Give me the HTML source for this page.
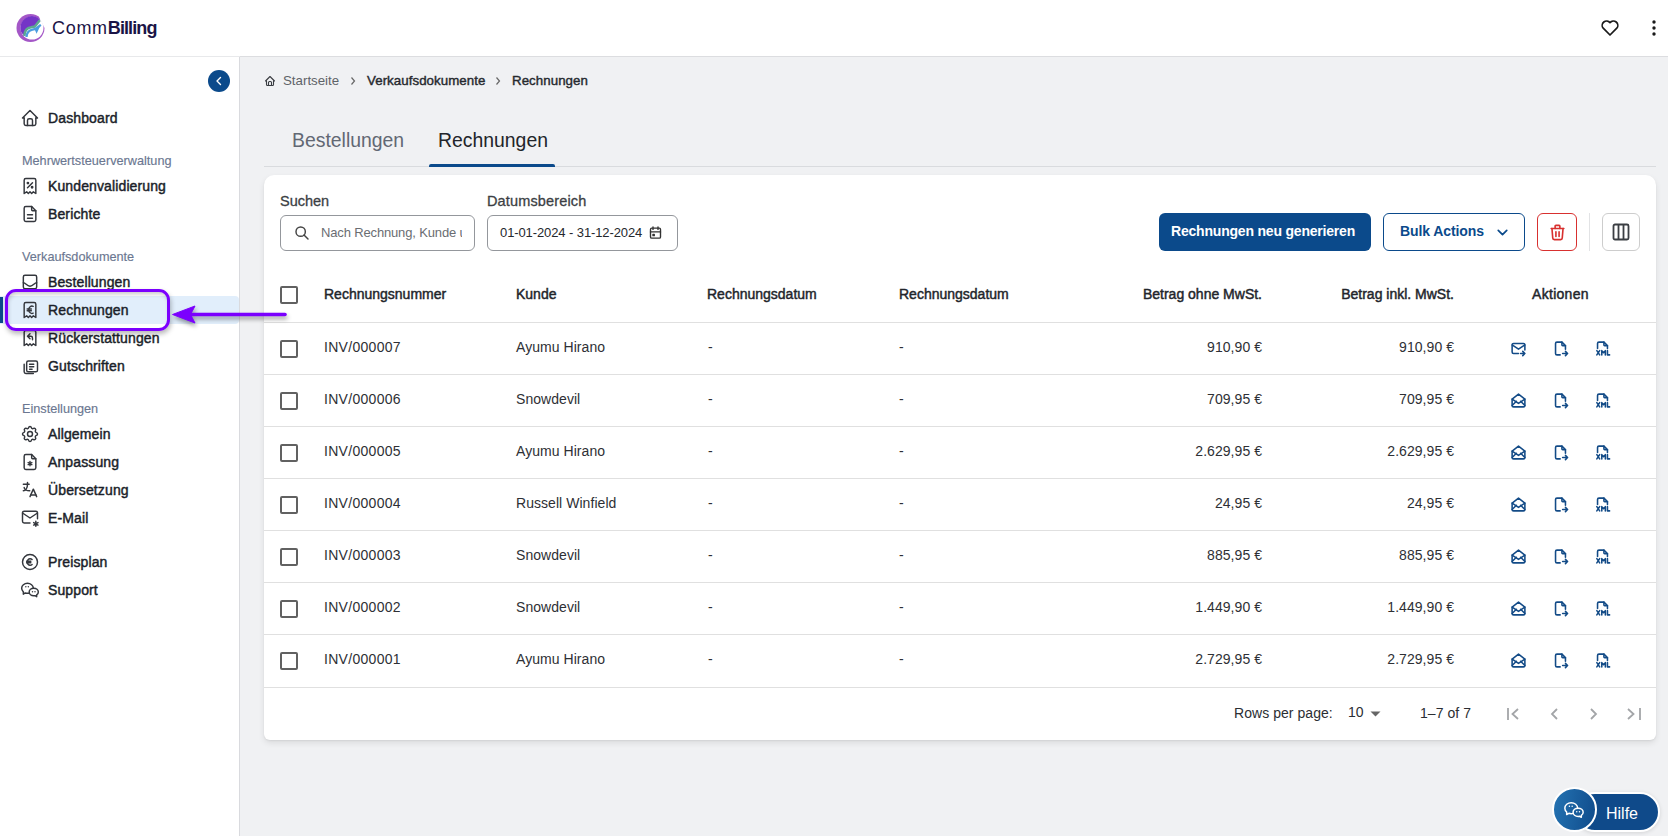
<!DOCTYPE html>
<html><head><meta charset="utf-8">
<style>
*{box-sizing:border-box;margin:0;padding:0}
html,body{width:1668px;height:836px;overflow:hidden;background:#f0f1f3;font-family:"Liberation Sans",sans-serif;color:#1f2228}
.abs{position:absolute}
.t{position:absolute;white-space:nowrap;line-height:20px;height:20px}
#header{position:absolute;left:0;top:0;width:1668px;height:56px;background:#fff}
#sidebar{position:absolute;left:0;top:56px;width:240px;height:780px;background:#fff;border-right:1px solid #d9dade}
.nav{position:absolute;left:0;width:239px;height:28px}
.nav .lbl{position:absolute;left:48px;top:4px;line-height:20px;font-size:14px;font-weight:400;-webkit-text-stroke:0.45px #1b1f2a;color:#1b1f2a;letter-spacing:0.12px;white-space:nowrap}
.nav svg{position:absolute;left:20px;top:4px}
.sec{position:absolute;left:22px;font-size:12.7px;color:#6b7791;line-height:18px;-webkit-text-stroke:0.15px #6b7791;white-space:nowrap}
#card{position:absolute;left:264px;top:175px;width:1392px;height:565px;background:#fff;border-radius:10px 10px 6px 6px;box-shadow:0 3px 6px rgba(0,0,0,0.09),0 1px 2px rgba(0,0,0,0.06)}
.hd{position:absolute;font-size:14px;font-weight:400;-webkit-text-stroke:0.45px #22252b;color:#22252b;white-space:nowrap;line-height:20px}
.cell{position:absolute;font-size:14px;color:#2e3035;letter-spacing:0.05px;white-space:nowrap;line-height:20px}
.row{position:absolute;left:0;width:1392px;height:52px;border-bottom:1px solid #e0e0e0}
.cb{position:absolute;left:16px;width:18px;height:18px;border:2px solid #616161;border-radius:2px}
</style></head>
<body>
<div id="header">
  <!-- logo -->
  <svg class="abs" style="left:15px;top:13px" width="31" height="30" viewBox="15 13 31 30">
    <circle cx="30.5" cy="28" r="14" fill="#a457c7"/>
    <circle cx="32" cy="28" r="11.5" fill="#fff"/>
    <path d="M37.8 13 L47 13 L47 27.5 L44.3 27.5 L40.2 19.8 Z" fill="#fff"/>
    <path d="M20.4 28 A11.6 11.6 0 0 1 37.6 17.6 L40 19.8 L34.6 26.2 L31 27 C26.5 27.5 24.5 30 24.4 35.5 C21.5 33.5 20.4 31 20.4 28 Z" fill="#7434c6"/>
    <path d="M24.4 36 C24.5 30.5 26.5 27.8 31 27.2 L34.8 26.5 L39.8 20.2" stroke="#5da890" stroke-width="2.5" fill="none"/>
    <path d="M26.5 37 C26.8 32.5 28.8 30.2 32.5 29.6 L35.6 29 L40.8 24.8" stroke="#4b9de0" stroke-width="2.3" fill="none"/>
    <path d="M34.5 29 L41 24.2 L36.6 33.8 Z" fill="#4b9de0"/>
  </svg>
  <div class="t" style="left:52px;top:18px;font-size:18px;color:#1b1446"><span style="letter-spacing:0.7px">Comm</span><b style="letter-spacing:-0.9px">Billing</b></div>
  <!-- heart -->
  <svg class="abs" style="left:1600px;top:18px" width="20" height="20" viewBox="0 0 20 20"><path d="M10 17 L3.2 10.2 A3.9 3.9 0 0 1 10 4.6 A3.9 3.9 0 0 1 16.8 10.2 Z" fill="none" stroke="#1a1a1a" stroke-width="1.7" stroke-linejoin="round"/></svg>
  <svg class="abs" style="left:1650px;top:19px" width="8" height="18" viewBox="0 0 8 18"><circle cx="4" cy="3" r="1.7" fill="#1a1a1a"/><circle cx="4" cy="9" r="1.7" fill="#1a1a1a"/><circle cx="4" cy="15" r="1.7" fill="#1a1a1a"/></svg>
</div>

<div id="sidebar">
  <div class="abs" style="left:0;top:0;width:240px;height:1px;background:#e8e9eb"></div>
  <div class="abs" style="left:208px;top:14px;width:22px;height:22px;border-radius:50%;background:#0b4a8b"></div>
  <svg class="abs" style="left:208px;top:14px" width="22" height="22" viewBox="0 0 22 22"><path d="M12.5 7.5 L9 11 L12.5 14.5" stroke="#fff" stroke-width="1.4" fill="none" stroke-linecap="round" stroke-linejoin="round"/></svg>
  <div class="nav" style="top:48px"><svg width="20" height="20" viewBox="0 0 24 24" fill="none" stroke="#34373d" stroke-width="1.75" stroke-linecap="round" stroke-linejoin="round"><path d="M5 12H3l9-9 9 9h-2"/><path d="M5 12v7a2 2 0 0 0 2 2h10a2 2 0 0 0 2-2v-7"/><path d="M9 21v-6a2 2 0 0 1 2-2h2a2 2 0 0 1 2 2v6"/></svg><div class="lbl">Dashboard</div></div>
  <div class="sec" style="top:96px">Mehrwertsteuerverwaltung</div>
  <div class="nav" style="top:116px"><svg width="20" height="20" viewBox="0 0 24 24" fill="none" stroke="#34373d" stroke-width="1.75" stroke-linecap="round" stroke-linejoin="round"><path d="M9 14l6-6"/><circle cx="9.5" cy="8.5" r="0.8"/><circle cx="14.5" cy="13.5" r="0.8"/><path d="M5 21V5a2 2 0 0 1 2-2h10a2 2 0 0 1 2 2v16l-3-2-2 2-2-2-2 2-2-2-3 2"/></svg><div class="lbl">Kundenvalidierung</div></div>
  <div class="nav" style="top:144px"><svg width="20" height="20" viewBox="0 0 24 24" fill="none" stroke="#34373d" stroke-width="1.75" stroke-linecap="round" stroke-linejoin="round"><path d="M14 3v4a1 1 0 0 0 1 1h4"/><path d="M17 21H7a2 2 0 0 1-2-2V5a2 2 0 0 1 2-2h7l5 5v11a2 2 0 0 1-2 2z"/><path d="M9 13h6"/><path d="M9 17h6"/></svg><div class="lbl">Berichte</div></div>
  <div class="sec" style="top:192px">Verkaufsdokumente</div>
  <div class="nav" style="top:212px"><svg width="20" height="20" viewBox="0 0 24 24" fill="none" stroke="#34373d" stroke-width="1.75" stroke-linecap="round" stroke-linejoin="round"><rect x="4" y="4" width="16" height="16" rx="2"/><path d="M4 13c3 0 4 4 8 4s5-4 8-4"/></svg><div class="lbl">Bestellungen</div></div>
  <div class="abs" style="left:0;top:240px;width:239px;height:28px;background:#e1eefb;border-radius:0 4px 4px 0"></div>
  <div class="abs" style="left:0;top:241px;width:3px;height:26px;background:#0b4a8b"></div>
  <div class="nav" style="top:240px"><svg width="20" height="20" viewBox="0 0 24 24" fill="none" stroke="#34373d" stroke-width="1.75" stroke-linecap="round" stroke-linejoin="round"><path d="M5 21V5a2 2 0 0 1 2-2h10a2 2 0 0 1 2 2v16l-3-2-2 2-2-2-2 2-2-2-3 2"/><path d="M15.8 7.6a3.9 4.4 0 1 0 0 8.2"/><path d="M8.6 10.8h5M8.6 12.8h5"/></svg><div class="lbl">Rechnungen</div></div>
  <div class="nav" style="top:268px"><svg width="20" height="20" viewBox="0 0 24 24" fill="none" stroke="#34373d" stroke-width="1.75" stroke-linecap="round" stroke-linejoin="round"><path d="M5 21V5a2 2 0 0 1 2-2h10a2 2 0 0 1 2 2v16l-3-2-2 2-2-2-2 2-2-2-3 2"/><path d="M15 14v-2a2 2 0 0 0-2-2H9l3-3m-3 3 3 3"/></svg><div class="lbl">Rückerstattungen</div></div>
  <div class="nav" style="top:296px"><svg width="20" height="20" viewBox="0 0 24 24" fill="none" stroke="#34373d" stroke-width="1.75" stroke-linecap="round" stroke-linejoin="round"><path d="M8 8a2 2 0 0 1 2-2h9a2 2 0 0 1 2 2v9a2 2 0 0 1-2 2h-9a2 2 0 0 1-2-2z"/><path d="M5 10v9a2 2 0 0 0 2 2h9"/><path d="M11.5 10h5M11.5 13h5M11.5 16h3"/></svg><div class="lbl">Gutschriften</div></div>
  <div class="sec" style="top:344px">Einstellungen</div>
  <div class="nav" style="top:364px"><svg width="20" height="20" viewBox="0 0 24 24" fill="none" stroke="#34373d" stroke-width="1.75" stroke-linecap="round" stroke-linejoin="round"><path d="M10.325 4.317c.426-1.756 2.924-1.756 3.35 0a1.724 1.724 0 0 0 2.573 1.066c1.543-.94 3.31.826 2.37 2.37a1.724 1.724 0 0 0 1.065 2.572c1.756.426 1.756 2.924 0 3.35a1.724 1.724 0 0 0-1.066 2.573c.94 1.543-.826 3.31-2.37 2.37a1.724 1.724 0 0 0-2.572 1.065c-.426 1.756-2.924 1.756-3.35 0a1.724 1.724 0 0 0-2.573-1.066c-1.543.94-3.31-.826-2.37-2.37a1.724 1.724 0 0 0-1.065-2.572c-1.756-.426-1.756-2.924 0-3.35a1.724 1.724 0 0 0 1.066-2.573c-.94-1.543.826-3.31 2.37-2.37 1 .608 2.296.07 2.572-1.065z"/><circle cx="12" cy="12" r="3"/></svg><div class="lbl">Allgemein</div></div>
  <div class="nav" style="top:392px"><svg width="20" height="20" viewBox="0 0 24 24" fill="none" stroke="#34373d" stroke-width="1.75" stroke-linecap="round" stroke-linejoin="round"><path d="M14 3v4a1 1 0 0 0 1 1h4"/><path d="M17 21H7a2 2 0 0 1-2-2V5a2 2 0 0 1 2-2h7l5 5v11a2 2 0 0 1-2 2z"/><path d="M12 11.5v5M9.8 12.75l4.4 2.5M14.2 12.75l-4.4 2.5"/></svg><div class="lbl">Anpassung</div></div>
  <div class="nav" style="top:420px"><svg width="20" height="20" viewBox="0 0 24 24" fill="none" stroke="#34373d" stroke-width="1.75" stroke-linecap="round" stroke-linejoin="round"><path d="M4 5h7"/><path d="M9 3v2c0 4.418-2.239 8-5 8"/><path d="M5 9c0 2.144 2.952 3.908 6.7 4"/><path d="M12 20l4-9 4 9"/><path d="M19.1 18h-6.2"/></svg><div class="lbl">Übersetzung</div></div>
  <div class="nav" style="top:448px"><svg width="20" height="20" viewBox="0 0 24 24" fill="none" stroke="#34373d" stroke-width="1.75" stroke-linecap="round" stroke-linejoin="round"><path d="M12 18H5a2 2 0 0 1-2-2V6a2 2 0 0 1 2-2h14a2 2 0 0 1 2 2v7"/><path d="M3 6l9 6 9-6"/><path d="M19 16v6M16.4 17.5l5.2 3M21.6 17.5l-5.2 3"/></svg><div class="lbl">E-Mail</div></div>
  <div class="nav" style="top:492px"><svg width="20" height="20" viewBox="0 0 24 24" fill="none" stroke="#34373d" stroke-width="1.75" stroke-linecap="round" stroke-linejoin="round"><circle cx="12" cy="12" r="9"/><path d="M14.5 9a3.5 4 0 1 0 0 6"/><path d="M8 11h5M8 13h5"/></svg><div class="lbl">Preisplan</div></div>
  <div class="nav" style="top:520px"><svg width="20" height="20" viewBox="0 0 24 24" fill="none" stroke="#34373d" stroke-width="1.75" stroke-linecap="round" stroke-linejoin="round"><path d="M16.5 10c3.038 0 5.5 2.015 5.5 4.5 0 1.397-.778 2.645-2 3.47V20l-1.964-1.178a6.649 6.649 0 0 1-1.536.178c-3.038 0-5.5-2.015-5.5-4.5s2.462-4.5 5.5-4.5z"/><path d="M11.197 15.698c-.69.196-1.43.302-2.197.302a8.008 8.008 0 0 1-2.612-.432L4 17v-2.801C2.763 13.117 2 11.635 2 10c0-3.314 3.134-6 7-6 3.782 0 6.863 2.57 7 5.785v.233"/><path d="M10 8h.01M7 8h.01M15 14h.01M18 14h.01"/></svg><div class="lbl">Support</div></div>
</div>


<div class="abs" style="left:240px;top:56px;width:1428px;height:1px;background:#dcdde0"></div>
<!-- breadcrumb -->
<svg class="abs" style="left:264px;top:75px" width="12" height="12" viewBox="0 0 24 24" fill="none" stroke="#3a3d42" stroke-width="2.2" stroke-linecap="round" stroke-linejoin="round"><path d="M5 12H3l9-9 9 9h-2"/><path d="M5 12v7a2 2 0 0 0 2 2h10a2 2 0 0 0 2-2v-7"/><path d="M9 21v-6a2 2 0 0 1 2-2h2a2 2 0 0 1 2 2v6"/></svg>
<div class="t" style="left:283px;top:71px;font-size:13.3px;color:#5f6368">Startseite</div>
<svg class="abs" style="left:349px;top:76px" width="8" height="10" viewBox="0 0 8 10"><path d="M2.5 1.5 L5.5 5 L2.5 8.5" stroke="#666" stroke-width="1.2" fill="none"/></svg>
<div class="t" style="left:367px;top:71px;font-size:13.3px;-webkit-text-stroke:0.4px #26292e;color:#26292e;letter-spacing:0.05px">Verkaufsdokumente</div>
<svg class="abs" style="left:494px;top:76px" width="8" height="10" viewBox="0 0 8 10"><path d="M2.5 1.5 L5.5 5 L2.5 8.5" stroke="#666" stroke-width="1.2" fill="none"/></svg>
<div class="t" style="left:512px;top:71px;font-size:13.3px;-webkit-text-stroke:0.4px #26292e;color:#26292e;letter-spacing:0.05px">Rechnungen</div>

<!-- tabs -->
<div class="abs" style="left:264px;top:166px;width:1392px;height:1px;background:#d9dbde"></div>
<div class="t" style="left:292px;top:128px;height:24px;line-height:24px;font-size:19.4px;color:#626873">Bestellungen</div>
<div class="t" style="left:438px;top:128px;height:24px;line-height:24px;font-size:19.4px;color:#22252a">Rechnungen</div>
<div class="abs" style="left:429px;top:164px;width:126px;height:3px;background:#0b4a8b;border-radius:2px 2px 0 0"></div>

<!-- card -->
<div id="card">
  <div class="t" style="left:16px;top:16px;font-size:14.5px;-webkit-text-stroke:0.3px #3c3f44;color:#3c3f44">Suchen</div>
  <div class="abs" style="left:16px;top:40px;width:195px;height:36px;border:1px solid #94979c;border-radius:6px"></div>
  <svg class="abs" style="left:30px;top:50px" width="16" height="16" viewBox="0 0 24 24" fill="none" stroke="#444" stroke-width="2.2" stroke-linecap="round"><circle cx="10" cy="10" r="7"/><path d="M21 21l-6-6"/></svg>
  <div class="t" style="left:57px;top:48px;width:141px;overflow:hidden;font-size:13px;color:#6a6d72;letter-spacing:-0.15px">Nach Rechnung, Kunde u</div>
  <div class="t" style="left:223px;top:16px;font-size:14.5px;-webkit-text-stroke:0.3px #3c3f44;color:#3c3f44;letter-spacing:0.15px">Datumsbereich</div>
  <div class="abs" style="left:223px;top:40px;width:191px;height:36px;border:1px solid #94979c;border-radius:6px"></div>
  <div class="t" style="left:236px;top:48px;font-size:13px;color:#25282d;letter-spacing:-0.1px">01-01-2024 - 31-12-2024</div>
  <svg class="abs" style="left:384px;top:50px" width="15" height="15" viewBox="0 0 24 24" fill="none" stroke="#333" stroke-width="2.2" stroke-linecap="round" stroke-linejoin="round"><rect x="4" y="5" width="16" height="16" rx="2"/><path d="M16 3v4M8 3v4M4 11h16"/><rect x="8" y="15" width="2" height="2" fill="#333"/></svg>

  <!-- buttons -->
  <div class="abs" style="left:895px;top:38px;width:212px;height:38px;background:#0b4a8b;border-radius:6px"></div>
  <div class="t" style="left:907px;top:46px;font-size:14px;font-weight:700;color:#fff;letter-spacing:-0.2px">Rechnungen neu generieren</div>
  <div class="abs" style="left:1119px;top:38px;width:142px;height:38px;border:1px solid #0b4a8b;border-radius:6px"></div>
  <div class="t" style="left:1136px;top:46px;font-size:14px;font-weight:700;color:#0b4a8b;letter-spacing:-0.1px">Bulk Actions</div>
  <svg class="abs" style="left:1230px;top:49px" width="17" height="17" viewBox="0 0 24 24" fill="none" stroke="#0b4a8b" stroke-width="2.4" stroke-linecap="round" stroke-linejoin="round"><path d="M6 9l6 6 6-6"/></svg>
  <div class="abs" style="left:1273px;top:38px;width:40px;height:38px;border:1px solid #d8302f;border-radius:6px"></div>
  <svg class="abs" style="left:1284px;top:48px" width="19" height="19" viewBox="0 0 24 24" fill="none" stroke="#d8302f" stroke-width="2.05" stroke-linecap="round" stroke-linejoin="round"><path d="M4 7h16"/><path d="M10 11v6M14 11v6"/><path d="M5 7l1 12a2 2 0 0 0 2 2h8a2 2 0 0 0 2-2l1-12"/><path d="M9 7V4a1 1 0 0 1 1-1h4a1 1 0 0 1 1 1v3"/></svg>
  <div class="abs" style="left:1325px;top:38px;width:1px;height:38px;background:#e2e3e5"></div>
  <div class="abs" style="left:1338px;top:38px;width:38px;height:38px;border:1px solid #cdcdcd;border-radius:6px"></div>
  <svg class="abs" style="left:1347px;top:47px" width="20" height="20" viewBox="0 0 20 20" fill="none" stroke="#3b3e43" stroke-width="1.8" stroke-linejoin="round"><rect x="2.5" y="2.5" width="15" height="15" rx="1.5"/><path d="M7.5 2.5v15M12.5 2.5v15"/></svg>

  <!-- table header -->
  <div class="cb" style="top:111px"></div>
  <div class="hd" style="left:60px;top:109px">Rechnungsnummer</div>
  <div class="hd" style="left:252px;top:109px">Kunde</div>
  <div class="hd" style="left:443px;top:109px">Rechnungsdatum</div>
  <div class="hd" style="left:635px;top:109px">Rechnungsdatum</div>
  <div class="hd" style="right:394px;top:109px">Betrag ohne MwSt.</div>
  <div class="hd" style="right:202px;top:109px">Betrag inkl. MwSt.</div>
  <div class="hd" style="left:1268px;top:109px;letter-spacing:0.3px">Aktionen</div>
  <div class="abs" style="left:0;top:147px;width:1392px;height:1px;background:#e0e0e0"></div>
  <div class="cb" style="top:165px"></div>
  <div class="cell" style="left:60px;top:162px;letter-spacing:0.3px">INV/000007</div>
  <div class="cell" style="left:252px;top:162px">Ayumu Hirano</div>
  <div class="cell" style="left:444px;top:162px">-</div>
  <div class="cell" style="left:635px;top:162px">-</div>
  <div class="cell" style="right:394px;top:162px">910,90 €</div>
  <div class="cell" style="right:202px;top:162px">910,90 €</div>
  <svg class="abs" style="left:1246px;top:165px" width="17" height="17" viewBox="0 0 24 24" fill="none" stroke="#134b87" stroke-width="2.2" stroke-linecap="round" stroke-linejoin="round"><path d="M12 19H5a2 2 0 0 1-2-2V7a2 2 0 0 1 2-2h14a2 2 0 0 1 2 2v7"/><path d="M3 7l9 6 9-6"/><path d="M15 19h6m-3-3 3 3-3 3"/></svg>
  <svg class="abs" style="left:1288px;top:165px" width="17" height="17" viewBox="0 0 24 24" fill="none" stroke="#134b87" stroke-width="2.2" stroke-linecap="round" stroke-linejoin="round"><path d="M14 3v4a1 1 0 0 0 1 1h4"/><path d="M11.5 21H7a2 2 0 0 1-2-2V5a2 2 0 0 1 2-2h7l5 5v5"/><path d="M15 19h7m-3-3 3 3-3 3"/></svg>
  <svg class="abs" style="left:1330px;top:165px" width="17" height="17" viewBox="0 0 24 24" fill="none" stroke="#134b87" stroke-width="2.2" stroke-linecap="round" stroke-linejoin="round"><path d="M14 3v4a1 1 0 0 0 1 1h4"/><path d="M5 12V5a2 2 0 0 1 2-2h7l5 5v4"/><path d="M4 15l4 6M4 21l4-6M19 15v6h3M11 21v-6l2.5 3 2.5-3v6"/></svg>
  <div class="abs" style="left:0;top:199px;width:1392px;height:1px;background:#e0e0e0"></div>
  <div class="cb" style="top:217px"></div>
  <div class="cell" style="left:60px;top:214px;letter-spacing:0.3px">INV/000006</div>
  <div class="cell" style="left:252px;top:214px">Snowdevil</div>
  <div class="cell" style="left:444px;top:214px">-</div>
  <div class="cell" style="left:635px;top:214px">-</div>
  <div class="cell" style="right:394px;top:214px">709,95 €</div>
  <div class="cell" style="right:202px;top:214px">709,95 €</div>
  <svg class="abs" style="left:1246px;top:217px" width="17" height="17" viewBox="0 0 24 24" fill="none" stroke="#134b87" stroke-width="2.2" stroke-linecap="round" stroke-linejoin="round"><path d="M3 10l9-7 9 7v9a2 2 0 0 1-2 2H5a2 2 0 0 1-2-2z"/><path d="M3 19l6-6M15 13l6 6"/><path d="M3 10l9 6 9-6"/></svg>
  <svg class="abs" style="left:1288px;top:217px" width="17" height="17" viewBox="0 0 24 24" fill="none" stroke="#134b87" stroke-width="2.2" stroke-linecap="round" stroke-linejoin="round"><path d="M14 3v4a1 1 0 0 0 1 1h4"/><path d="M11.5 21H7a2 2 0 0 1-2-2V5a2 2 0 0 1 2-2h7l5 5v5"/><path d="M15 19h7m-3-3 3 3-3 3"/></svg>
  <svg class="abs" style="left:1330px;top:217px" width="17" height="17" viewBox="0 0 24 24" fill="none" stroke="#134b87" stroke-width="2.2" stroke-linecap="round" stroke-linejoin="round"><path d="M14 3v4a1 1 0 0 0 1 1h4"/><path d="M5 12V5a2 2 0 0 1 2-2h7l5 5v4"/><path d="M4 15l4 6M4 21l4-6M19 15v6h3M11 21v-6l2.5 3 2.5-3v6"/></svg>
  <div class="abs" style="left:0;top:251px;width:1392px;height:1px;background:#e0e0e0"></div>
  <div class="cb" style="top:269px"></div>
  <div class="cell" style="left:60px;top:266px;letter-spacing:0.3px">INV/000005</div>
  <div class="cell" style="left:252px;top:266px">Ayumu Hirano</div>
  <div class="cell" style="left:444px;top:266px">-</div>
  <div class="cell" style="left:635px;top:266px">-</div>
  <div class="cell" style="right:394px;top:266px">2.629,95 €</div>
  <div class="cell" style="right:202px;top:266px">2.629,95 €</div>
  <svg class="abs" style="left:1246px;top:269px" width="17" height="17" viewBox="0 0 24 24" fill="none" stroke="#134b87" stroke-width="2.2" stroke-linecap="round" stroke-linejoin="round"><path d="M3 10l9-7 9 7v9a2 2 0 0 1-2 2H5a2 2 0 0 1-2-2z"/><path d="M3 19l6-6M15 13l6 6"/><path d="M3 10l9 6 9-6"/></svg>
  <svg class="abs" style="left:1288px;top:269px" width="17" height="17" viewBox="0 0 24 24" fill="none" stroke="#134b87" stroke-width="2.2" stroke-linecap="round" stroke-linejoin="round"><path d="M14 3v4a1 1 0 0 0 1 1h4"/><path d="M11.5 21H7a2 2 0 0 1-2-2V5a2 2 0 0 1 2-2h7l5 5v5"/><path d="M15 19h7m-3-3 3 3-3 3"/></svg>
  <svg class="abs" style="left:1330px;top:269px" width="17" height="17" viewBox="0 0 24 24" fill="none" stroke="#134b87" stroke-width="2.2" stroke-linecap="round" stroke-linejoin="round"><path d="M14 3v4a1 1 0 0 0 1 1h4"/><path d="M5 12V5a2 2 0 0 1 2-2h7l5 5v4"/><path d="M4 15l4 6M4 21l4-6M19 15v6h3M11 21v-6l2.5 3 2.5-3v6"/></svg>
  <div class="abs" style="left:0;top:303px;width:1392px;height:1px;background:#e0e0e0"></div>
  <div class="cb" style="top:321px"></div>
  <div class="cell" style="left:60px;top:318px;letter-spacing:0.3px">INV/000004</div>
  <div class="cell" style="left:252px;top:318px">Russell Winfield</div>
  <div class="cell" style="left:444px;top:318px">-</div>
  <div class="cell" style="left:635px;top:318px">-</div>
  <div class="cell" style="right:394px;top:318px">24,95 €</div>
  <div class="cell" style="right:202px;top:318px">24,95 €</div>
  <svg class="abs" style="left:1246px;top:321px" width="17" height="17" viewBox="0 0 24 24" fill="none" stroke="#134b87" stroke-width="2.2" stroke-linecap="round" stroke-linejoin="round"><path d="M3 10l9-7 9 7v9a2 2 0 0 1-2 2H5a2 2 0 0 1-2-2z"/><path d="M3 19l6-6M15 13l6 6"/><path d="M3 10l9 6 9-6"/></svg>
  <svg class="abs" style="left:1288px;top:321px" width="17" height="17" viewBox="0 0 24 24" fill="none" stroke="#134b87" stroke-width="2.2" stroke-linecap="round" stroke-linejoin="round"><path d="M14 3v4a1 1 0 0 0 1 1h4"/><path d="M11.5 21H7a2 2 0 0 1-2-2V5a2 2 0 0 1 2-2h7l5 5v5"/><path d="M15 19h7m-3-3 3 3-3 3"/></svg>
  <svg class="abs" style="left:1330px;top:321px" width="17" height="17" viewBox="0 0 24 24" fill="none" stroke="#134b87" stroke-width="2.2" stroke-linecap="round" stroke-linejoin="round"><path d="M14 3v4a1 1 0 0 0 1 1h4"/><path d="M5 12V5a2 2 0 0 1 2-2h7l5 5v4"/><path d="M4 15l4 6M4 21l4-6M19 15v6h3M11 21v-6l2.5 3 2.5-3v6"/></svg>
  <div class="abs" style="left:0;top:355px;width:1392px;height:1px;background:#e0e0e0"></div>
  <div class="cb" style="top:373px"></div>
  <div class="cell" style="left:60px;top:370px;letter-spacing:0.3px">INV/000003</div>
  <div class="cell" style="left:252px;top:370px">Snowdevil</div>
  <div class="cell" style="left:444px;top:370px">-</div>
  <div class="cell" style="left:635px;top:370px">-</div>
  <div class="cell" style="right:394px;top:370px">885,95 €</div>
  <div class="cell" style="right:202px;top:370px">885,95 €</div>
  <svg class="abs" style="left:1246px;top:373px" width="17" height="17" viewBox="0 0 24 24" fill="none" stroke="#134b87" stroke-width="2.2" stroke-linecap="round" stroke-linejoin="round"><path d="M3 10l9-7 9 7v9a2 2 0 0 1-2 2H5a2 2 0 0 1-2-2z"/><path d="M3 19l6-6M15 13l6 6"/><path d="M3 10l9 6 9-6"/></svg>
  <svg class="abs" style="left:1288px;top:373px" width="17" height="17" viewBox="0 0 24 24" fill="none" stroke="#134b87" stroke-width="2.2" stroke-linecap="round" stroke-linejoin="round"><path d="M14 3v4a1 1 0 0 0 1 1h4"/><path d="M11.5 21H7a2 2 0 0 1-2-2V5a2 2 0 0 1 2-2h7l5 5v5"/><path d="M15 19h7m-3-3 3 3-3 3"/></svg>
  <svg class="abs" style="left:1330px;top:373px" width="17" height="17" viewBox="0 0 24 24" fill="none" stroke="#134b87" stroke-width="2.2" stroke-linecap="round" stroke-linejoin="round"><path d="M14 3v4a1 1 0 0 0 1 1h4"/><path d="M5 12V5a2 2 0 0 1 2-2h7l5 5v4"/><path d="M4 15l4 6M4 21l4-6M19 15v6h3M11 21v-6l2.5 3 2.5-3v6"/></svg>
  <div class="abs" style="left:0;top:407px;width:1392px;height:1px;background:#e0e0e0"></div>
  <div class="cb" style="top:425px"></div>
  <div class="cell" style="left:60px;top:422px;letter-spacing:0.3px">INV/000002</div>
  <div class="cell" style="left:252px;top:422px">Snowdevil</div>
  <div class="cell" style="left:444px;top:422px">-</div>
  <div class="cell" style="left:635px;top:422px">-</div>
  <div class="cell" style="right:394px;top:422px">1.449,90 €</div>
  <div class="cell" style="right:202px;top:422px">1.449,90 €</div>
  <svg class="abs" style="left:1246px;top:425px" width="17" height="17" viewBox="0 0 24 24" fill="none" stroke="#134b87" stroke-width="2.2" stroke-linecap="round" stroke-linejoin="round"><path d="M3 10l9-7 9 7v9a2 2 0 0 1-2 2H5a2 2 0 0 1-2-2z"/><path d="M3 19l6-6M15 13l6 6"/><path d="M3 10l9 6 9-6"/></svg>
  <svg class="abs" style="left:1288px;top:425px" width="17" height="17" viewBox="0 0 24 24" fill="none" stroke="#134b87" stroke-width="2.2" stroke-linecap="round" stroke-linejoin="round"><path d="M14 3v4a1 1 0 0 0 1 1h4"/><path d="M11.5 21H7a2 2 0 0 1-2-2V5a2 2 0 0 1 2-2h7l5 5v5"/><path d="M15 19h7m-3-3 3 3-3 3"/></svg>
  <svg class="abs" style="left:1330px;top:425px" width="17" height="17" viewBox="0 0 24 24" fill="none" stroke="#134b87" stroke-width="2.2" stroke-linecap="round" stroke-linejoin="round"><path d="M14 3v4a1 1 0 0 0 1 1h4"/><path d="M5 12V5a2 2 0 0 1 2-2h7l5 5v4"/><path d="M4 15l4 6M4 21l4-6M19 15v6h3M11 21v-6l2.5 3 2.5-3v6"/></svg>
  <div class="abs" style="left:0;top:459px;width:1392px;height:1px;background:#e0e0e0"></div>
  <div class="cb" style="top:477px"></div>
  <div class="cell" style="left:60px;top:474px;letter-spacing:0.3px">INV/000001</div>
  <div class="cell" style="left:252px;top:474px">Ayumu Hirano</div>
  <div class="cell" style="left:444px;top:474px">-</div>
  <div class="cell" style="left:635px;top:474px">-</div>
  <div class="cell" style="right:394px;top:474px">2.729,95 €</div>
  <div class="cell" style="right:202px;top:474px">2.729,95 €</div>
  <svg class="abs" style="left:1246px;top:477px" width="17" height="17" viewBox="0 0 24 24" fill="none" stroke="#134b87" stroke-width="2.2" stroke-linecap="round" stroke-linejoin="round"><path d="M3 10l9-7 9 7v9a2 2 0 0 1-2 2H5a2 2 0 0 1-2-2z"/><path d="M3 19l6-6M15 13l6 6"/><path d="M3 10l9 6 9-6"/></svg>
  <svg class="abs" style="left:1288px;top:477px" width="17" height="17" viewBox="0 0 24 24" fill="none" stroke="#134b87" stroke-width="2.2" stroke-linecap="round" stroke-linejoin="round"><path d="M14 3v4a1 1 0 0 0 1 1h4"/><path d="M11.5 21H7a2 2 0 0 1-2-2V5a2 2 0 0 1 2-2h7l5 5v5"/><path d="M15 19h7m-3-3 3 3-3 3"/></svg>
  <svg class="abs" style="left:1330px;top:477px" width="17" height="17" viewBox="0 0 24 24" fill="none" stroke="#134b87" stroke-width="2.2" stroke-linecap="round" stroke-linejoin="round"><path d="M14 3v4a1 1 0 0 0 1 1h4"/><path d="M5 12V5a2 2 0 0 1 2-2h7l5 5v4"/><path d="M4 15l4 6M4 21l4-6M19 15v6h3M11 21v-6l2.5 3 2.5-3v6"/></svg>
  <div class="abs" style="left:0;top:512px;width:1392px;height:1px;background:#e0e0e0"></div>

  <!-- footer -->
  <div class="cell" style="left:970px;top:528px;color:#2b2e33">Rows per page:</div>
  <div class="cell" style="left:1084px;top:527px;color:#2b2e33">10</div>
  <svg class="abs" style="left:1106px;top:536px" width="11" height="6" viewBox="0 0 11 6"><path d="M0.5 0.5h10L5.5 5.5z" fill="#666"/></svg>
  <div class="cell" style="left:1156px;top:528px;color:#2b2e33">1–7 of 7</div>
  <svg class="abs" style="left:1242px;top:532px" width="16" height="14" viewBox="0 0 16 14" fill="none" stroke="#a3a5a8" stroke-width="1.8"><path d="M2 1v12"/><path d="M12 2 L6.5 7 L12 12"/></svg>
  <svg class="abs" style="left:1284px;top:532px" width="12" height="14" viewBox="0 0 12 14" fill="none" stroke="#a3a5a8" stroke-width="1.8"><path d="M9 2 L4 7 L9 12"/></svg>
  <svg class="abs" style="left:1324px;top:532px" width="12" height="14" viewBox="0 0 12 14" fill="none" stroke="#a3a5a8" stroke-width="1.8"><path d="M3 2 L8 7 L3 12"/></svg>
  <svg class="abs" style="left:1362px;top:532px" width="16" height="14" viewBox="0 0 16 14" fill="none" stroke="#a3a5a8" stroke-width="1.8"><path d="M14 1v12"/><path d="M2 2 L7.5 7 L2 12"/></svg>
</div>

<!-- annotation -->
<div class="abs" style="left:5px;top:289px;width:165px;height:42px;border:3px solid #7b00fe;border-radius:11px;box-shadow:1px 3px 5px rgba(0,0,0,0.28), inset 1px 3px 4px -1px rgba(0,0,0,0.22)"></div>
<svg class="abs" style="left:160px;top:296px;filter:drop-shadow(1px 3px 2px rgba(0,0,0,0.38))" width="140" height="40" viewBox="160 296 140 40">
  <path d="M190 314.5 H285" stroke="#7b00fe" stroke-width="3.6" stroke-linecap="round"/>
  <path d="M172.5 314.5 L195 306 L190.5 314.5 L195 323 Z" fill="#7b00fe" stroke="#7b00fe" stroke-width="1" stroke-linejoin="round"/>
</svg>

<!-- Hilfe -->
<div class="abs" style="left:1575px;top:792px;width:85px;height:40px;border-radius:20px;background:#0f4a8a;border:2px solid #fff;box-shadow:0 1px 4px rgba(0,0,0,0.12)"></div>
<div class="abs" style="left:1552px;top:787px;width:45px;height:45px;border-radius:50%;background:linear-gradient(100deg,#2473b2,#0f4b8b);border:2px solid #fff"></div>
<svg class="abs" style="left:1563px;top:799px" width="22" height="22" viewBox="0 0 24 24" fill="none" stroke="#fff" stroke-width="1.6" stroke-linecap="round" stroke-linejoin="round"><path d="M16.5 10c3.038 0 5.5 2.015 5.5 4.5 0 1.397-.778 2.645-2 3.47V20l-1.964-1.178a6.649 6.649 0 0 1-1.536.178c-3.038 0-5.5-2.015-5.5-4.5s2.462-4.5 5.5-4.5z"/><path d="M11.197 15.698c-.69.196-1.43.302-2.197.302a8.008 8.008 0 0 1-2.612-.432L4 17v-2.801C2.763 13.117 2 11.635 2 10c0-3.314 3.134-6 7-6 3.782 0 6.863 2.57 7 5.785v.233"/><path d="M10 8h.01M7 8h.01M15 14h.01M18 14h.01"/></svg>
<div class="t" style="left:1606px;top:804px;font-size:16px;color:#fff">Hilfe</div>

</body></html>
